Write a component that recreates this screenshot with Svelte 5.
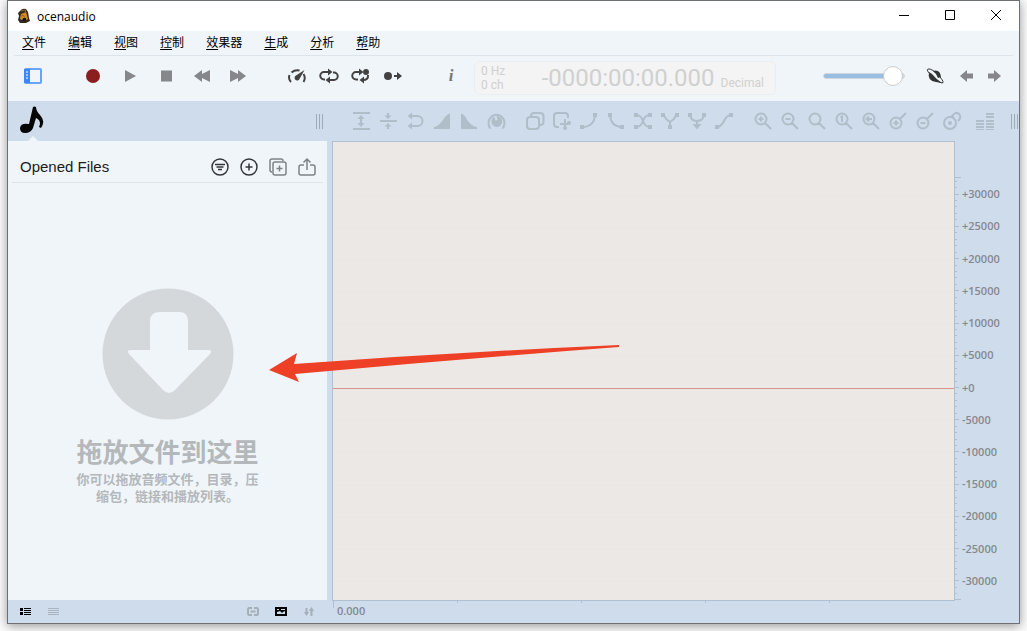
<script lang="ts">
  interface Icon {
    label: string;
    line?: string;
    fill?: string;
    color?: string;
  }

  const menus = ['文件', '编辑', '视图', '控制', '效果器', '生成', '分析', '帮助'];

  const transport: Icon[] = [
    { label: 'Record', fill: 'M10 3a7 7 0 1 0 0 14a7 7 0 1 0 0-14z', color: '#8b1f1f' },
    { label: 'Play', fill: 'M6 4L17 10L6 16z' },
    { label: 'Stop', fill: 'M6 4.500H17V15.500H6z' },
    { label: 'Rewind', fill: 'M3 10L11 4V8L19 4V16L11 12V16z' },
    { label: 'Fast forward', fill: 'M19 10L11 4V8L3 4V16L11 12V16z' },
  ];

  const modes: Icon[] = [
    {
      label: 'Playback speed',
      line: 'M4 16Q1 13 2.500 9M4.500 6.500Q8 3.500 12.500 4.500M16.500 8Q19 12 16.500 16',
      fill: 'M17.500 4L12.500 13A2.600 2.600 0 1 1 9 9.500z',
    },
    {
      label: 'Loop',
      line: 'M6 13.500H5A3.700 3.700 0 0 1 5 6H10M14 6.500H15A3.700 3.700 0 0 1 15 14H10',
      fill: 'M9 2.500L13.500 6L9 9.500zM11 10.500L6.500 14L11 17.500z',
    },
    {
      label: 'Loop selection',
      line: 'M7 13.500H5A3.700 3.700 0 0 1 5 6H10M17 9Q17.500 14 12 14',
      fill: 'M8 2.500L12.500 6L8 9.500zM13 10.500L8.500 14L13 17.500zM15 3a3 3 0 1 0 0 6a3 3 0 1 0 0-6z',
    },
    {
      label: 'Play to end',
      line: 'M11 10H16',
      fill: 'M5 6a4 4 0 1 0 0 8a4 4 0 1 0 0-8zM14 6L19 10L14 14z',
    },
  ];

  const lens = 'M8 2.500a5.500 5.500 0 1 0 0 11a5.500 5.500 0 1 0 0-11M12 12L18 18';
  const pin = 'M8 6.500a5.500 5.500 0 1 0 0 11a5.500 5.500 0 1 0 0-11M12 8L18 2';

  const editTools: Icon[][] = [
    [
      { label: 'Expand', line: 'M2 2H19M2 18H19M10 7V13', fill: 'M10 4L13.500 8H6.500zM10 16L13.500 12H6.500z' },
      { label: 'Normalize', line: 'M2 10H19M10 2V5M10 15V18', fill: 'M10 8L13.500 4.500H6.500zM10 12L13.500 15.500H6.500z' },
      { label: 'Reverse', line: 'M6 5H12.500A4.500 4.500 0 0 1 12.500 15H7', fill: 'M2.500 5L7 1.500V8.500zM2.500 15L7 11.500V18.500z' },
      { label: 'Fade in', fill: 'M2 18V16Q6 15.500 11 9Q14 3.500 18 2.500V18z' },
      { label: 'Fade out', fill: 'M2 2.500Q6 3.500 8 9Q13 15.500 18 16V18H2z' },
      {
        label: 'Gain',
        line: 'M4 16.500A8 8 0 1 1 17 16.500',
        fill: 'M8.500 5.500L9.500 9.500L11.500 9L10.500 5A5.500 5.500 0 1 1 8.500 5.500zM1.500 14.500L6 17.500H3zM19 14.500L15 17.500H18z',
      },
    ],
    [
      {
        label: 'Copy',
        line: 'M5 6H11Q14 6 14 9V15Q14 18 11 18H5Q2 18 2 15V9Q2 6 5 6zM6 5Q6 2 9 2H15Q18.500 2 18.500 5V11Q18.500 14 15 14',
      },
      {
        label: 'Cut',
        line: 'M7 16H5Q2 16 2 13V5Q2 2 5 2H13Q16 2 16 5V7M13 8V15M8 13H16',
        fill: 'M17 10a2 2 0 1 0 .1 4a2 2 0 1 0-.1-4M13 15a2 2 0 1 0 .1 4a2 2 0 1 0-.1-4',
      },
      { label: 'Curve up', line: 'M3 16Q15 16 16 4', fill: 'M1 14H5V18H1zM14 2H18V6H14z' },
      { label: 'Curve down', line: 'M4 4Q5 16 16 16', fill: 'M2 2H6V6H2zM14 14H18V18H14z' },
      {
        label: 'Crossfade',
        line: 'M3 4Q8 4 10 10Q12 16 17 16M17 4Q12 4 10 10Q8 16 3 16',
        fill: 'M1 2H5V6H1zM15 2H19V6H15zM1 14H5V18H1zM15 14H19V18H15z',
      },
      { label: 'Join', line: 'M3 4Q5 5 6 8L10 11L14 8Q15 5 17 4M10 11V17', fill: 'M1 2H5V6H1zM15 2H19V6H15zM8 14H12V18H8z' },
      { label: 'Merge', line: 'M3 4Q4 10 10 10Q16 10 17 4M10 10V14', fill: 'M1 2H5V6H1zM15 2H19V6H15zM5.500 13H14.500L10 18.500z' },
      { label: 'Smooth', line: 'M3 16Q7 16 10 10Q13 4 17 4', fill: 'M1 14H5V18H1zM15 2H19V6H15z' },
    ],
    [
      { label: 'Zoom in', line: `${lens}M5.500 8H10.500M8 5.500V10.500` },
      { label: 'Zoom out', line: `${lens}M5.500 8H10.500` },
      { label: 'Zoom selection', line: lens },
      { label: 'Zoom 1:1', line: `${lens}M6.500 6.500L8 5.500V11` },
      { label: 'Zoom back', line: `${lens}M11 8H5.500M8 5.500L5.500 8L8 10.500` },
      { label: 'Vertical zoom in', line: `${pin}M5.500 12H10.500M8 9.500V14.500` },
      { label: 'Vertical zoom out', line: `${pin}M5.500 12H10.500` },
      {
        label: 'Vertical zoom reset',
        line: 'M8 6a6 6 0 1 0 0 12a6 6 0 1 0 0-12M12 7L10 5Q14 0 17 3Q20 6 16 10',
        fill: 'M8 10a2 2 0 1 0 0 4a2 2 0 1 0 0-4z',
      },
    ],
    [
      {
        label: 'Level meter',
        fill: 'M1 9H9V11H1zM1 12H9V14H1zM1 15H9V17H1zM1 18H9V19H1zM11 2H19V4H11zM11 5H19V7H11zM11 9H19V11H11zM11 12H19V14H11zM11 15H19V17H11zM11 18H19V19H11z',
      },
    ],
  ];

  const fileTools: Icon[] = [
    { label: 'Filter', line: 'M10 2a8 8 0 1 0 0 16a8 8 0 1 0 0-16M5 7.500H15M6.500 10H13.500M8 12.500H12', color: '#33373b' },
    { label: 'New file', line: 'M10 2a8 8 0 1 0 0 16a8 8 0 1 0 0-16M6.500 10H13.500M10 6.500V13.500', color: '#33373b' },
    {
      label: 'Duplicate',
      line: 'M7 5H16Q18 5 18 7V16Q18 18 16 18H7Q5 18 5 16V7Q5 5 7 5zM4 15Q2 15 2 13V4Q2 2 4 2H13Q15 2 15 4M8.500 11.500H14.500M11.500 8.500V14.500',
      color: '#7e8387',
    },
    {
      label: 'Share',
      line: 'M7 8H4Q2 8 2 10V16Q2 18 4 18H16Q18 18 18 16V10Q18 8 16 8H13M10 13V2M6.500 5.500L10 2L13.500 5.500',
      color: '#7e8387',
    },
  ];

  const viewTools: Icon[] = [
    { label: 'Detailed list', fill: 'M0 2H3V5H0zM0 6H3V9H0zM4 2H11V3H4zM4 4H11V5H4zM4 6H11V7H4zM4 8H11V9H4z', color: '#000' },
    { label: 'Compact list', fill: 'M0 2H11V3H0zM0 4H11V5H0zM0 6H11V7H0zM0 8H11V9H0z', color: '#aab4bf' },
  ];

  const linkTools: Icon[] = [
    { label: 'Link', line: 'M5 2H2Q1 2 1 4V7Q1 9 2 9H5M7 2H10Q11 2 11 4V7Q11 9 10 9H7M3.500 5.500H8.500', color: '#a4afba' },
    { label: 'Preview', fill: 'M0 1H12V10H0zM2 6V8H10V5L8 6L7 7L5 5zM2 3V4H4V3zM6 3V4H10V3z', color: '#000' },
    { label: 'Sort', line: 'M3.500 2V8M8.500 4V10', fill: 'M1 6H6L3.500 10zM6 5H11L8.500 1z', color: '#a4afba' },
  ];

  const levels = Array.from({ length: 13 }, (_, i) => 30000 - i * 5000);

  let volume = $state(98);

  function levelText(value: number) {
    return value < 0 ? `${value}` : `+${value}`;
  }
</script>

{#snippet iconButton(icon: Icon, size = 20, stroke = 2)}
  <button type="button" class="icon" aria-label={icon.label} style:color={icon.color}>
    <svg width={size} height={size} viewBox="0 0 {size} {size}" aria-hidden="true">
      {#if icon.line}
        <path d={icon.line} fill="none" stroke="currentColor" stroke-width={stroke} />
      {/if}
      {#if icon.fill}
        <path d={icon.fill} fill="currentColor" fill-rule="evenodd" />
      {/if}
    </svg>
  </button>
{/snippet}

<div class="window">
  <header class="titlebar">
    <svg class="logo" width="14" height="16" viewBox="0 0 14 16" aria-hidden="true">
      <path d="M3 3Q5 0 9 1L11 4L12 10L13 13L9 15H3L1 12L2 8L1 5z" fill="#33291d" />
      <path d="M4 6L9 4L11 11L7 13L3 11z" fill="#d68a1c" />
      <path d="M4 3L8 2L9 5M3 9L6 7L8 10" fill="none" stroke="#8f6b35" />
      <path d="M6 10H9V13H5z" fill="#171717" />
    </svg>
    <span>ocenaudio</span>
    <div class="window-controls">
      <button type="button" class="icon" aria-label="Minimize">
        <svg width="12" height="12" viewBox="0 0 12 12"><path d="M1 5.500H11" /></svg>
      </button>
      <button type="button" class="icon" aria-label="Maximize">
        <svg width="12" height="12" viewBox="0 0 12 12"><path d="M1.500 .5H10.500V9.500H1.500z" /></svg>
      </button>
      <button type="button" class="icon" aria-label="Close">
        <svg width="12" height="12" viewBox="0 0 12 12"><path d="M1 0L11 10M11 0L1 10" /></svg>
      </button>
    </div>
  </header>

  <nav class="menubar">
    {#each menus as menu}
      <button type="button"><u>{menu[0]}</u>{menu.slice(1)}</button>
    {/each}
  </nav>

  <div class="toolbar">
    <button type="button" class="icon" aria-label="Toggle sidebar">
      <svg width="20" height="20" viewBox="0 0 20 20">
        <rect x="2" y="3" width="16" height="14" rx="1" fill="none" stroke="#68a3fb" stroke-width="2" />
        <path d="M1 3H7V17H1z" fill="#3c88fb" />
        <path d="M3 6H5M3 9H5M3 12H5" stroke="#fff" />
      </svg>
    </button>
    <div class="transport">
      {#each transport as icon}
        {@render iconButton(icon)}
      {/each}
    </div>
    <div class="modes">
      {#each modes as icon}
        {@render iconButton(icon)}
      {/each}
    </div>
    <button type="button" class="icon info" aria-label="Information">i</button>
    <div class="display">
      <div class="format"><span>0 Hz</span><span>0 ch</span></div>
      <span class="clock">-0000:00:00.000</span>
      <span class="unit">Decimal</span>
    </div>
    <div class="output">
      <input
        type="range"
        aria-label="Volume"
        min="0"
        max="100"
        bind:value={volume}
        style:--level="{volume}%"
      />
      <button type="button" class="icon dark" aria-label="Effects">
        <svg width="20" height="20" viewBox="0 0 20 20">
          <path d="M4 6Q2 15 11 16L17 17Q11 13 7 8z" fill="currentColor" />
          <path d="M8 5Q15 3 16 11L13 12Q11 7 8 5z" fill="currentColor" />
          <path d="M3 3Q7 2 15 11Q20 17 17 17Q12 16 5 8Q1 4 3 3z" fill="none" stroke="currentColor" />
        </svg>
      </button>
      <div class="history">
        {@render iconButton({ label: 'Back', fill: 'M4 10L11 4V7.500H17V12.500H11V16z' })}
        {@render iconButton({ label: 'Forward', fill: 'M17 10L10 4V7.500H4V12.500H10V16z' })}
      </div>
    </div>
  </div>

  <div class="editbar">
    <button type="button" class="icon tab" aria-label="Files">
      <svg width="26" height="28" viewBox="0 0 26 28">
        <path
          d="M14 1Q15 0 17 1Q17 5 21 9Q27 15 22 22L20 21Q23 15 17 12L14 22Q12 27 6 27Q1 27 1 22Q2 17 9 18L10 18z"
          fill="#050505"
        />
      </svg>
    </button>
    <span class="grip"></span>
    <div class="edit-groups">
      {#each editTools as group}
        <div class="edit-group">
          {#each group as icon}
            {@render iconButton(icon)}
          {/each}
        </div>
      {/each}
    </div>
    <span class="grip last"></span>
  </div>

  <main class="workspace">
    <aside class="files">
      <div class="files-head">
        <h1>Opened Files</h1>
        <div class="file-tools">
          {#each fileTools as icon}
            {@render iconButton(icon, 20, 1.5)}
          {/each}
        </div>
      </div>
      <div class="drop">
        <svg width="132" height="132" viewBox="0 0 132 132" aria-hidden="true">
          <circle cx="66" cy="66" r="65.500" fill="#d4d8db" />
          <path
            d="M58 24H77Q86 24 86 33V62H106Q111 62 108 66L73 102Q67 108 61 102L27 66Q24 62 29 62H48V33Q48 24 58 24z"
            fill="#f0f5f9"
          />
        </svg>
        <h2>拖放文件到这里</h2>
        <p>你可以拖放音频文件，目录，压缩包，链接和播放列表。</p>
      </div>
    </aside>

    <section class="canvas" aria-label="Waveform">
      {#each levels as level}
        <div class="level" class:zero={level === 0}></div>
      {/each}
    </section>

    <div class="scale">
      <i class="edge"></i>
      {#each levels as level}
        <div class="mark">
          <div class="ticks"><i></i><i></i><i></i><i></i><i></i></div>
          <span>{levelText(level)}</span>
        </div>
      {/each}
      <i class="edge bottom"></i>
    </div>

    <svg class="pointer" width="351" height="40" viewBox="0 0 351 40" aria-hidden="true">
      <path d="M0 25L28 8L25 19Q190 7 350 0V2Q190 14 26 29L30 37z" fill="#ee4026" />
    </svg>
  </main>

  <footer class="status">
    <div class="status-tools">
      <div class="status-group">
        {#each viewTools as icon}
          {@render iconButton(icon, 12)}
        {/each}
      </div>
      <div class="status-group">
        {#each linkTools as icon}
          {@render iconButton(icon, 12)}
        {/each}
      </div>
    </div>
    <div class="timeline">
      <div>0.000</div>
      <div></div>
      <div></div>
      <div></div>
      <div></div>
    </div>
  </footer>
</div>

<style>
  :global(body) {
    background: #fbfbfb;
  }

  .window {
    --panel: #f0f5f9;
    --bar: #cfdceb;
    --edge: #afc0d3;
    display: flex;
    flex-direction: column;
    box-sizing: border-box;
    min-height: calc(100vh - 7px);
    margin: 0 7px 7px;
    border: 1px solid #6c6f73;
    background: var(--panel);
    box-shadow: 0 2px 10px rgba(0, 0, 0, 0.4);
    font-family: 'Open Sans', 'Noto Sans CJK SC', sans-serif;
    font-size: 12px;
    color: #000;
  }

  button {
    padding: 0;
    border: 0;
    background: none;
    font: inherit;
    color: inherit;
  }

  .icon {
    display: flex;
    flex: none;
    align-items: center;
    justify-content: center;
  }

  /* Title and menus */
  .titlebar {
    display: flex;
    align-items: center;
    gap: 6px;
    height: 30px;
    padding: 0 17px 0 9px;
    background: #fff;
  }

  .window-controls {
    display: flex;
    gap: 34px;
    margin-left: auto;
  }

  .window-controls path {
    fill: none;
    stroke: #000;
  }

  .menubar {
    display: flex;
    gap: 22px;
    height: 24px;
    margin: 0 6px;
    padding: 0 8px;
    border-bottom: 1px solid #dde4ec;
    line-height: 22px;
  }

  .menubar u {
    text-underline-offset: 2px;
  }

  /* Main toolbar */
  .toolbar {
    display: flex;
    align-items: center;
    box-sizing: border-box;
    height: 45px;
    padding: 0 15px 6px;
    color: #85878b;
  }

  .transport,
  .modes,
  .history,
  .output {
    display: flex;
    align-items: center;
  }

  .transport {
    gap: 16px;
    margin-left: 40px;
  }

  .modes {
    gap: 12px;
    margin-left: 40px;
    color: #424242;
  }

  .info {
    width: 20px;
    margin-left: 38px;
    font: italic bold 17px 'Liberation Serif', serif;
    color: #777;
  }

  .display {
    display: flex;
    align-items: center;
    box-sizing: border-box;
    width: 302px;
    height: 34px;
    margin: 5px 0 0 13px;
    padding: 0 11px 0 6px;
    border: 1px solid #eceff1;
    border-radius: 6px;
    background: #f4f4f4;
    font-family: Roboto, sans-serif;
    color: #d0d0d0;
  }

  .format {
    display: flex;
    flex-direction: column;
    line-height: 14px;
  }

  .clock {
    margin-left: auto;
    font-size: 24px;
    line-height: 30px;
  }

  .unit {
    margin-left: 6px;
    padding-top: 10px;
  }

  .output {
    margin-left: auto;
  }

  .output input {
    width: 82px;
    height: 20px;
    margin: 0 20px 0 0;
    appearance: none;
    background: none;
  }

  .output input::-webkit-slider-runnable-track {
    height: 6px;
    border: 1px solid #cfd6dc;
    border-radius: 3px;
    background: linear-gradient(to right, #9abde4 var(--level), #d5d9dd var(--level));
  }

  .output input::-webkit-slider-thumb {
    appearance: none;
    width: 20px;
    height: 20px;
    margin-top: -8px;
    border: 1px solid #ccc;
    border-radius: 50%;
    background: #fff;
  }

  .dark {
    color: #333;
  }

  .history {
    gap: 8px;
    margin-left: 11px;
  }

  /* Editing toolbar */
  .editbar {
    display: flex;
    align-items: center;
    height: 40px;
    background: var(--bar);
    color: #b0beca;
  }

  .tab {
    position: relative;
    align-items: flex-start;
    box-sizing: border-box;
    width: 26px;
    height: 40px;
    margin-left: 11px;
    padding-top: 5px;
  }

  .tab::after {
    position: absolute;
    bottom: 0;
    left: 9px;
    border: 5px solid transparent;
    border-top: 0;
    border-bottom-color: var(--panel);
    content: '';
  }

  .grip {
    flex: none;
    width: 8px;
    height: 15px;
    margin-left: 271px;
    background: repeating-linear-gradient(to right, #9eabb9 0 1px, transparent 1px 3px);
  }

  .grip.last {
    margin-left: auto;
  }

  .edit-groups {
    display: flex;
    gap: 19px;
    margin-left: 27px;
  }

  .edit-group {
    display: flex;
    gap: 7px;
  }

  .edit-group:last-child {
    margin-left: -6px;
  }

  /* Workspace */
  .workspace {
    position: relative;
    display: grid;
    flex: 1;
    grid-template-columns: 319px 1fr 64px;
    background: var(--bar);
  }

  .files {
    display: flex;
    flex-direction: column;
    margin-bottom: 1px;
    background: var(--panel);
  }

  .files-head {
    display: flex;
    align-items: center;
    justify-content: space-between;
    box-sizing: border-box;
    height: 42px;
    margin: 0 4px;
    padding: 10px 6px 0 8px;
    border-bottom: 1px solid #dde4ec;
  }

  h1 {
    margin: 0;
    font: 15px 'Liberation Sans', Arial, sans-serif;
    color: #1b1b1b;
  }

  .file-tools {
    display: flex;
    gap: 9px;
  }

  .drop {
    display: flex;
    flex: 1;
    flex-direction: column;
    align-items: center;
    justify-content: center;
    padding-top: 8px;
    font-family: 'Noto Sans CJK SC', sans-serif;
    font-weight: bold;
    color: #b4b8bb;
  }

  .drop h2 {
    margin: 14px 0 2px;
    font-size: 26px;
    line-height: 34px;
  }

  .drop p {
    width: 184px;
    margin: 0;
    font-size: 13px;
    line-height: 17px;
    text-align: center;
  }

  .canvas {
    display: flex;
    flex-direction: column;
    margin-left: 5px;
    padding: 37px 0 2px;
    border: 1px solid var(--edge);
    background: #ece8e5;
  }

  .level {
    display: flex;
    flex: 1;
    align-items: center;
  }

  .level::before {
    flex: 1;
    height: 1px;
    background: #eae6e2;
    content: '';
  }

  .level.zero::before {
    background: #d8928f;
  }

  .scale {
    display: flex;
    flex-direction: column;
    padding: 36px 0 1px;
    font-size: 11px;
    font-weight: 600;
    color: #85898e;
  }

  .edge {
    width: 6px;
    height: 1px;
    background: var(--edge);
  }

  .edge.bottom {
    margin-top: 2px;
  }

  .mark {
    display: flex;
    flex: 1;
    align-items: center;
    gap: 3px;
    line-height: 14px;
  }

  .ticks {
    display: flex;
    flex-direction: column;
    justify-content: space-around;
    align-self: stretch;
    width: 4px;
  }

  .ticks i {
    width: 2px;
    height: 1px;
    background: var(--edge);
  }

  .ticks i:nth-child(3) {
    width: 4px;
  }

  .pointer {
    position: absolute;
    top: 204px;
    left: 261px;
  }

  /* Status bar */
  .status {
    display: flex;
    height: 22px;
    background: var(--bar);
  }

  .status-tools {
    display: flex;
    align-items: center;
    justify-content: space-between;
    box-sizing: border-box;
    width: 319px;
    padding: 0 12px;
  }

  .status-group {
    display: flex;
    gap: 16px;
  }

  .timeline {
    display: flex;
    flex: 1;
    margin: 0 66px 0 6px;
    font-size: 11px;
    font-weight: 600;
    line-height: 20px;
    color: #85898e;
  }

  .timeline div {
    flex: 1 0 0;
    box-sizing: border-box;
    padding-left: 4px;
    background: linear-gradient(var(--edge), var(--edge)) no-repeat 0 0 / 1px 2px;
  }

  .timeline div:first-child {
    background-size: 1px 7px;
  }
</style>
